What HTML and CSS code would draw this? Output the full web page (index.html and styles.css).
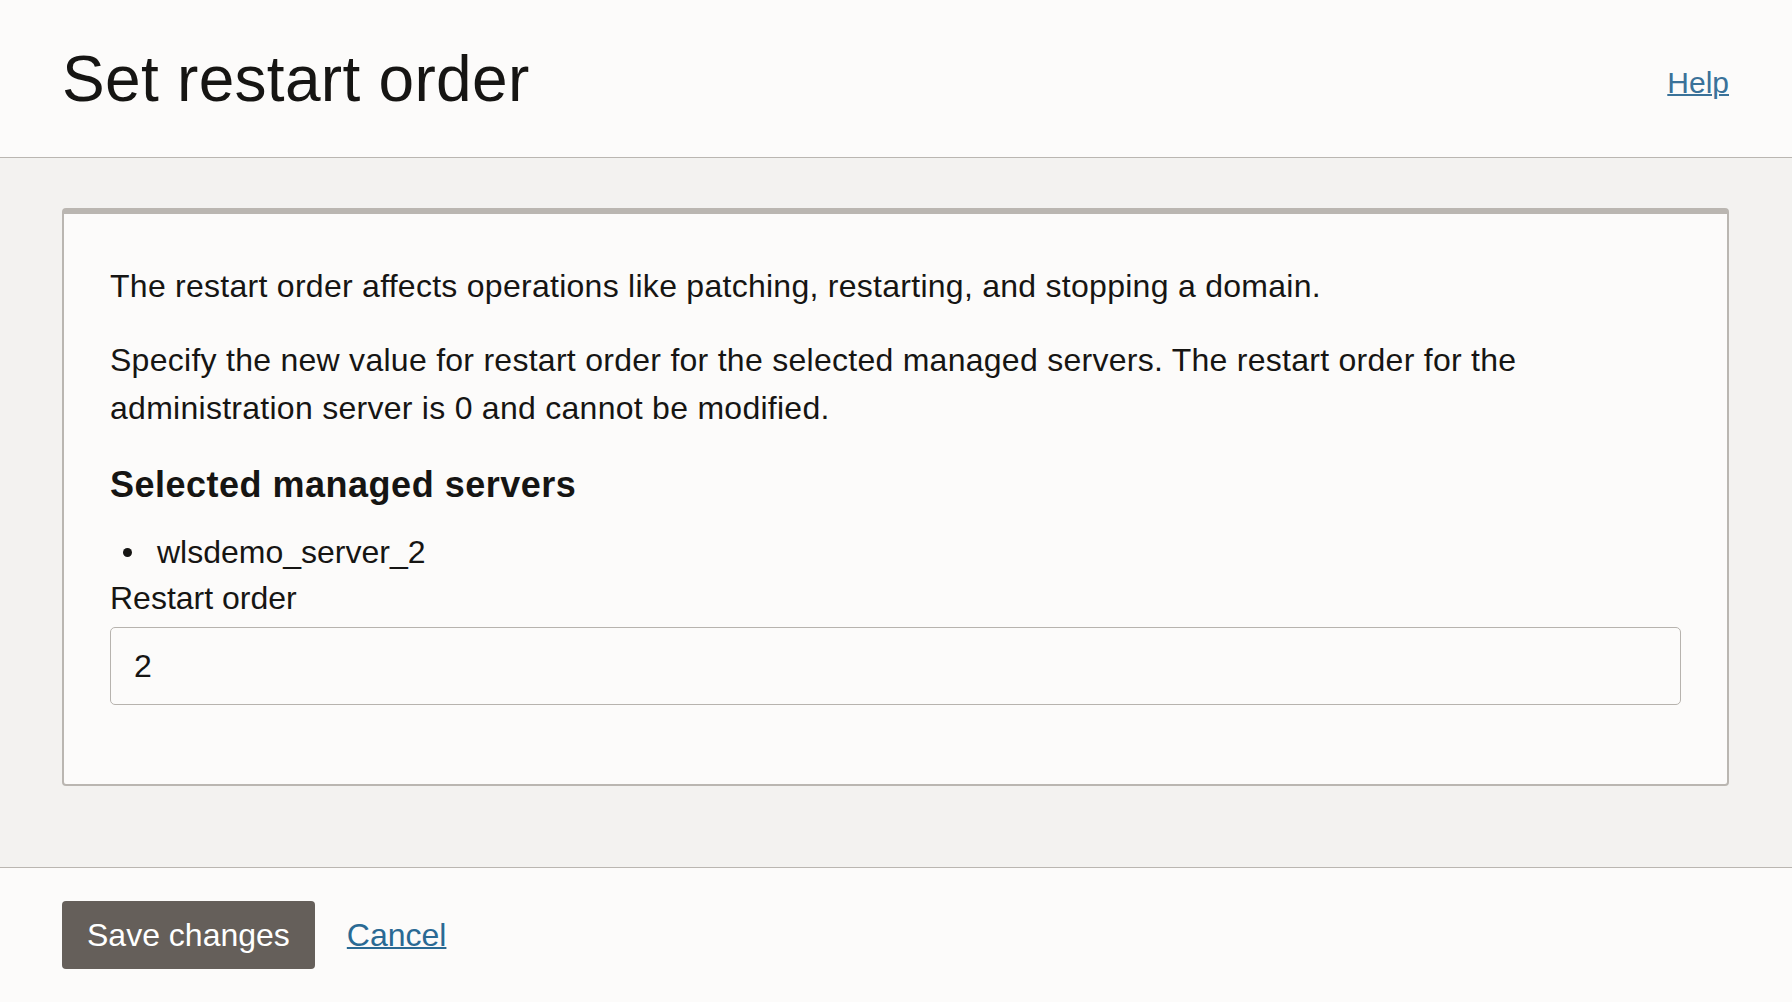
FILE: index.html
```html
<!DOCTYPE html>
<html lang="en">
<head>
<meta charset="utf-8">
<title>Set restart order</title>
<link rel="stylesheet" href="styles.css">
</head>
<body>
<header class="page-header">
  <h1 class="title">Set restart order</h1>
  <a class="help" href="#">Help</a>
</header>
<main class="content">
  <section class="card">
    <p class="text">The restart order affects operations like patching, restarting, and stopping a domain.</p>
    <p class="text">Specify the new value for restart order for the selected managed servers. The restart order for the administration server is 0 and cannot be modified.</p>
    <h2 class="section-title">Selected managed servers</h2>
    <ul class="server-list">
      <li class="server-item">wlsdemo_server_2</li>
    </ul>
    <label class="field-label" for="order">Restart order</label>
    <input class="field-input" id="order" type="text" value="2">
  </section>
</main>
<footer class="actions">
  <button class="btn-save" type="button">Save changes</button>
  <a class="cancel" href="#">Cancel</a>
</footer>
</body>
</html>
```

FILE: styles.css
```css
html, body {
  margin: 0;
  padding: 0;
}

body {
  font-family: "Liberation Sans", Arial, sans-serif;
  color: #161513;
  background: #fcfbfa;
  height: 1002px;
  display: flex;
  flex-direction: column;
}

.page-header {
  height: 157px;
  padding: 0 63px 0 62px;
  display: flex;
  justify-content: space-between;
  align-items: flex-start;
  border-bottom: 1px solid #bab6b1;
  background: #fcfbfa;
}

.title {
  margin: 43px 0 0;
  font-size: 64px;
  line-height: 72px;
  font-weight: 400;
  letter-spacing: 0.3px;
  color: #161513;
}

.help {
  margin-top: 60px;
  font-size: 30px;
  line-height: 45px;
  font-weight: 300;
  color: #3a7299;
  text-decoration: underline;
  text-decoration-thickness: 2px;
}

.content {
  background: #f3f2f0;
  padding: 50px 63px 81px 62px;
  border-bottom: 1px solid #bab6b1;
}

.card {
  background: #fcfbfa;
  border: 2px solid #bab6b1;
  border-top-width: 6px;
  border-radius: 4px;
  padding: 48px 46px 79px 46px;
}

.text {
  margin: 0;
  font-size: 32px;
  line-height: 48px;
  letter-spacing: 0.27px;
}

.text + .text {
  margin-top: 26px;
}

.section-title {
  margin: 31px 0 0;
  font-size: 36px;
  line-height: 43px;
  font-weight: 700;
  letter-spacing: 0.5px;
}

.server-list {
  list-style: none;
  margin: 22px 0 0;
  padding: 0 0 0 13px;
}

.server-item {
  display: flex;
  align-items: center;
  font-size: 32px;
  line-height: 48px;
}

.server-item::before {
  content: "";
  width: 9px;
  height: 9px;
  border-radius: 50%;
  background: #161513;
  margin-right: 25px;
}

.field-label {
  display: block;
  margin: 2px 0 9px;
  font-size: 32px;
  line-height: 40px;
}

.field-input {
  display: block;
  box-sizing: border-box;
  width: 100%;
  height: 78px;
  margin: 0;
  padding: 0 23px;
  border: 1px solid #b7b3ae;
  border-radius: 5px;
  background: #fcfbfa;
  font-family: "Liberation Sans", Arial, sans-serif;
  font-size: 32px;
  color: #161513;
  outline: none;
}

.actions {
  flex: 1;
  display: flex;
  align-items: center;
  padding: 0 62px;
  background: #fcfbfa;
}

.btn-save {
  height: 68px;
  padding: 0 25px;
  border: none;
  border-radius: 4px;
  background: #655f5a;
  color: #ffffff;
  font-family: "Liberation Sans", Arial, sans-serif;
  font-size: 32px;
  cursor: pointer;
}

.cancel {
  margin-left: 32px;
  font-size: 32px;
  color: #2a6a94;
  text-decoration: underline;
  text-decoration-thickness: 2px;
}
```
